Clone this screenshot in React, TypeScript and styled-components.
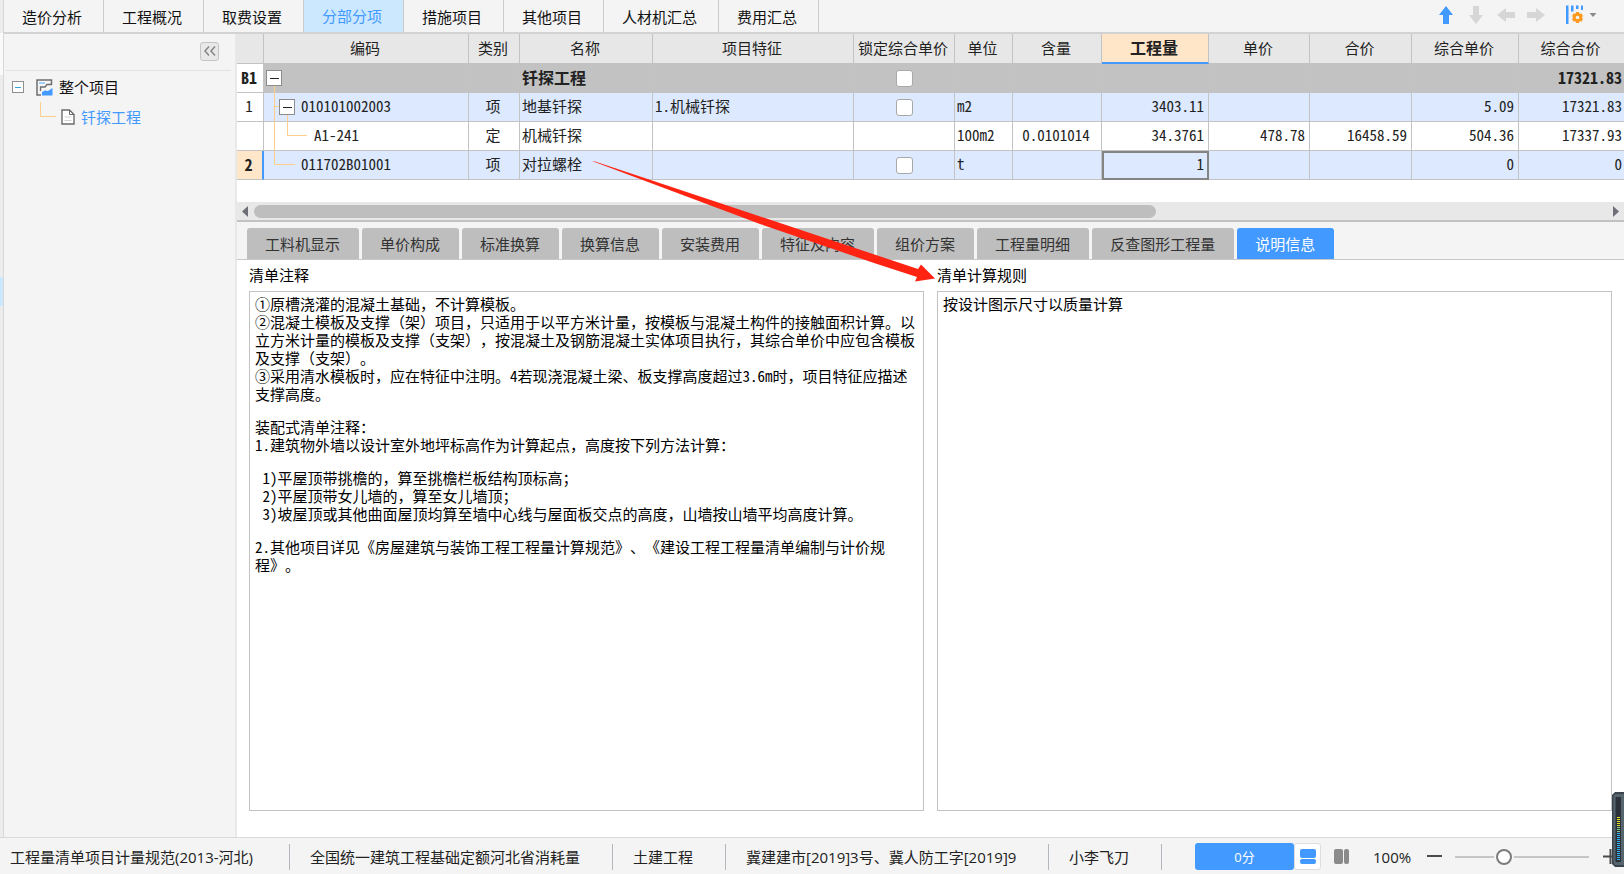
import React from "react";
import styled, { createGlobalStyle, css } from "styled-components";

const ui = '"Open Sans", "Noto Sans CJK SC", sans-serif';
const mono = '"Noto Sans Mono CJK SC", "Liberation Mono", "Noto Sans CJK SC", monospace';
const blue = "#4299ff";
const line = "#c3c3c3";
const guide = "#ffcd8c";

const GlobalStyle = createGlobalStyle`
  *, *::before, *::after { box-sizing: border-box; }
  body { margin: 0; background: #f4f4f4; color: #222; font: 15px/20px ${ui}; text-spacing-trim: space-all; }
  button, input { font: inherit; color: inherit; margin: 0; }
  button { padding: 0; border: 0; background: none; cursor: pointer; }
  h2, p, ul { margin: 0; padding: 0; }
  svg { display: block; flex: none; }
`;

const Page = styled.div`
  position: relative;
  min-height: 100vh;
  display: flex;
  flex-direction: column;
  overflow: hidden;
`;

const Workspace = styled.div`
  flex: 1;
  display: flex;
  min-width: 0;
`;

const DockStrip = styled.div`
  width: 4px;
  flex: none;
  background: linear-gradient(#ececec 33px, #fafafa 33px 75px, #ececec 75px 277px, #cce8ff 277px 306px, #ececec 306px);
  border-right: 1px solid #d8d8d8;
`;

const Main = styled.main`
  flex: 1;
  min-width: 0;
  display: flex;
  flex-direction: column;
`;

const TopBar = styled.header`
  height: 34px;
  display: flex;
  border-bottom: 2px solid #d2d2d2;
`;

const TopTabs = styled.nav`
  display: flex;
`;

const TopTab = styled.button<{ $active?: boolean }>`
  padding: ${(p) => (p.$active ? 0 : 2)}px 21px 0 18px;
  border-right: 1px solid #cbcbcb;
  color: ${(p) => (p.$active ? blue : "#111")};
  background: ${(p) => (p.$active ? "#cce8ff" : "transparent")};
`;

const Tools = styled.div`
  margin-left: auto;
  padding: 0 27px 2px 0;
  display: flex;
  align-items: center;
  gap: 12px;
`;

const ToolButton = styled.button`
  width: 18px;
  height: 30px;
  display: flex;
  align-items: center;
  justify-content: center;
`;

const ColumnsButton = styled(ToolButton)`
  width: 32px;
  margin-left: 8px;
  gap: 5px;
`;

const Body = styled.div`
  flex: 1;
  display: flex;
  min-width: 0;
`;

const Sidebar = styled.aside`
  width: 233px;
  flex: none;
  border-right: 2px solid #e8e8e8;
`;

const SidebarHead = styled.div`
  height: 37px;
  margin: 0 4px 0 2px;
  padding: 0 12px 2px 0;
  display: flex;
  align-items: center;
  justify-content: flex-end;
  border-bottom: 1px solid #e2e2e2;
`;

const Collapse = styled.button`
  width: 19px;
  height: 19px;
  display: grid;
  place-items: center;
  border: 1px solid #c4c4c4;
  border-radius: 3px;
  background: #e8e8e8;
`;

const ProjectTree = styled.ul`
  list-style: none;
  padding: 1px 0 0 8px;
`;

const TreeRow = styled.li<{ $child?: boolean }>`
  height: 30px;
  padding-left: ${(p) => (p.$child ? 28 : 0)}px;
  display: flex;
  align-items: center;
  gap: ${(p) => (p.$child ? 5 : 12)}px;
`;

const TreeLabel = styled.button<{ $active?: boolean }>`
  display: flex;
  align-items: center;
  gap: 6px;
  color: ${(p) => (p.$active ? blue : "#111")};
`;

const TreeToggle = styled.button`
  width: 12px;
  height: 12px;
  display: grid;
  place-items: center;
  border: 1px solid #8f8f8f;
  background: #fff;
  &::before { content: ""; width: 6px; height: 1px; background: #35a3dc; }
`;

const Content = styled.section`
  flex: 1;
  min-width: 0;
  display: flex;
  flex-direction: column;
  background: #fff;
`;

const Table = styled.table`
  width: 100%;
  table-layout: fixed;
  border-collapse: separate;
  border-spacing: 0;
  font: 15px/20px ${mono};
  margin-bottom: 22px;
`;

const cell = css`
  height: 29px;
  padding: 0 4px 3px 2px;
  border-right: 1px solid ${line};
  border-bottom: 1px solid ${line};
  white-space: nowrap;
  overflow: hidden;
`;

const Head = styled.th<{ $current?: boolean }>`
  ${cell}
  height: 30px;
  padding: 0 2px 2px 0;
  text-align: center;
  font-size: ${(p) => (p.$current ? 16 : 15)}px;
  font-weight: ${(p) => (p.$current ? 700 : 400)};
  background: ${(p) => (p.$current ? "#ffe6c8" : "#e7e7e7")};
  ${(p) => p.$current && `border-bottom: 2px solid ${blue};`}
  &:last-child { border-right: 0; }
`;

const RowHead = styled.th<{ $current?: boolean; $strong?: boolean }>`
  ${cell}
  padding: 0 2px 2px 0;
  text-align: center;
  font-size: ${(p) => (p.$strong ? 16 : 15)}px;
  font-weight: ${(p) => (p.$strong ? 700 : 400)};
  background: ${(p) => (p.$current ? "#ffe6c8" : "#fff")};
  ${(p) => p.$current && `border-right: 2px solid ${blue};`}
`;

const Row = styled.tr<{ $tone: string }>`
  background: ${(p) => p.$tone};
`;

const Cell = styled.td<{ $align?: string; $strong?: boolean; $selected?: boolean }>`
  ${cell}
  text-align: ${(p) => p.$align || "left"};
  font-size: ${(p) => (p.$strong ? 16 : 15)}px;
  font-weight: ${(p) => (p.$strong ? 700 : 400)};
  ${(p) => p.$selected && "outline: 2px solid #848484; outline-offset: -2px;"}
  &:last-child { border-right: 0; padding-right: 2px; }
`;

const CheckCell = styled.td`
  ${cell}
  padding: 0;
`;

const CodeCell = styled.td`
  ${cell}
  padding: 0;
  overflow: visible;
`;

const CodeInner = styled.div<{ $indent: number }>`
  position: relative;
  height: 28px;
  padding-left: ${(p) => p.$indent}px;
  display: flex;
  align-items: center;
  gap: 6px;
  span { padding-bottom: 3px; }
`;

const Guides = styled.svg`
  position: absolute;
  left: 0;
  top: 0;
  overflow: visible;
`;

const RowToggle = styled.button`
  position: relative;
  width: 16px;
  height: 16px;
  display: grid;
  place-items: center;
  border: 1px solid #8c8c8c;
  background: #fff;
  &::before { content: ""; width: 9px; height: 1px; background: #222; }
`;

const Check = styled.input`
  appearance: none;
  display: block;
  width: 17px;
  height: 17px;
  margin: 0 auto;
  border: 1px solid #a9a9a9;
  border-radius: 3px;
  background: #fff;
`;

const ScrollBar = styled.div`
  height: 20px;
  padding: 0 5px;
  display: flex;
  align-items: center;
  gap: 6px;
  background: #e8e8e8;
  border-bottom: 2px solid #c2c2c2;
`;

const ScrollTrack = styled.div`
  flex: 1;
  height: 13px;
`;

const ScrollThumb = styled.div`
  width: calc(100% * 2 / 3);
  height: 13px;
  border-radius: 7px;
  background: #bebebe;
`;

const DetailTabs = styled.nav`
  height: 38px;
  padding: 6px 10px 0;
  display: flex;
  gap: 3px;
  background: #f4f4f4;
  border-bottom: 1px solid #c8c8c8;
`;

const DetailTab = styled.button<{ $active?: boolean }>`
  padding: 0 19px 0 18px;
  border-radius: 3px 3px 0 0;
  color: ${(p) => (p.$active ? "#fff" : "#333")};
  background: ${(p) => (p.$active ? blue : "#bebebe")};
  white-space: nowrap;
`;

const Notes = styled.div`
  flex: 1;
  padding: 5px 12px 26px;
  display: grid;
  grid-template-columns: 1fr 1fr;
  gap: 13px;
  color: #000;
  font-family: ${mono};
`;

const Note = styled.section`
  min-width: 0;
  display: flex;
  flex-direction: column;
  gap: 6px;
`;

const NoteTitle = styled.h2`
  font: 15px/20px ${mono};
`;

const NoteBox = styled.div`
  flex: 1;
  padding: 3px 4px 4px 5px;
  border: 1px solid #c3c3c3;
  line-height: 18px;
`;

const Block = styled.p`
  margin-bottom: 15px;
  white-space: pre-wrap;
`;

const StatusBar = styled.footer`
  height: 37px;
  padding: 1px 6px 0 0;
  display: flex;
  align-items: center;
  border-top: 1px solid #d9d9d9;
`;

const StatusItem = styled.div<{ $width: number; $first?: boolean }>`
  height: 26px;
  padding: 0 32px 0 ${(p) => (p.$first ? 10 : 20)}px;
  border-right: 1px solid #b3b8be;
  line-height: 26px;
  span {
    display: block;
    width: ${(p) => p.$width}px;
    overflow: hidden;
    white-space: nowrap;
  }
`;

const StatusControls = styled.div`
  margin-left: auto;
  display: flex;
  align-items: center;
`;

const Score = styled.button`
  width: 99px;
  height: 27px;
  border-radius: 3px;
  background: ${blue};
  color: #fff;
  font-size: 13px;
`;

const ViewButton = styled.button<{ $on?: boolean }>`
  width: 27px;
  height: 27px;
  display: grid;
  place-items: center;
  border: 1px solid ${(p) => (p.$on ? "#dedede" : "transparent")};
  border-radius: 3px;
  background: ${(p) => (p.$on ? "#fff" : "transparent")};
  & + & { margin-left: 7px; }
`;

const Zoom = styled.label`
  width: 41px;
  margin: 0 12px 0 18px;
`;

const StepButton = styled.button`
  width: 16px;
  height: 26px;
  display: grid;
  place-items: center;
`;

const Slider = styled.input`
  appearance: none;
  width: 134px;
  height: 16px;
  margin: 0 13px;
  background: linear-gradient(#c6c6c6, #c6c6c6) center / 100% 2px no-repeat;
  &::-webkit-slider-thumb {
    appearance: none;
    width: 16px;
    height: 16px;
    border: 2px solid #7c7c7c;
    border-radius: 50%;
    background: #fff;
    box-shadow: -3px 0 0 -1px #f4f4f4, 3px 0 0 -1px #f4f4f4;
  }
`;

const LevelMeter = styled.svg`
  position: absolute;
  right: 0;
  bottom: 7px;
`;

const Annotation = styled.svg`
  position: absolute;
  left: 590px;
  top: 158px;
  pointer-events: none;
`;

const topTabs = ["造价分析", "工程概况", "取费设置", "分部分项", "措施项目", "其他项目", "人材机汇总", "费用汇总"];

const columns: { title: string; width?: number; current?: boolean }[] = [
  { title: "", width: 27 },
  { title: "编码", width: 205 },
  { title: "类别", width: 51 },
  { title: "名称", width: 133 },
  { title: "项目特征", width: 201 },
  { title: "锁定综合单价", width: 101 },
  { title: "单位", width: 58 },
  { title: "含量", width: 89 },
  { title: "工程量", width: 107, current: true },
  { title: "单价", width: 101 },
  { title: "合价", width: 102 },
  { title: "综合单价", width: 107 },
  { title: "综合合价" },
];

type Item = {
  no: string;
  code: string;
  kind: string;
  name: string;
  feature: string;
  lock: boolean;
  unit: string;
  values: string[];
  indent: number;
  toggle?: boolean;
  guides: string;
  tone: string;
  strong?: boolean;
  current?: boolean;
};

const items: Item[] = [
  { no: "B1", code: "", kind: "", name: "钎探工程", feature: "", lock: true, unit: "", values: ["", "", "", "", "", "17321.83"], indent: 2, toggle: true, guides: "M10.5 22V29", tone: "#c2c2c2", strong: true },
  { no: "1", code: "010101002003", kind: "项", name: "地基钎探", feature: "1.机械钎探", lock: true, unit: "m2", values: ["", "3403.11", "", "", "5.09", "17321.83"], indent: 15, toggle: true, guides: "M10.5 0V29M10.5 13.5H15M23.5 22V29", tone: "#dce9ff" },
  { no: "", code: "A1-241", kind: "定", name: "机械钎探", feature: "", lock: false, unit: "100m2", values: ["0.0101014", "34.3761", "478.78", "16458.59", "504.36", "17337.93"], indent: 50, guides: "M10.5 0V29M23.5 0V13.5H43", tone: "#fff" },
  { no: "2", code: "011702B01001", kind: "项", name: "对拉螺栓", feature: "", lock: true, unit: "t", values: ["", "1", "", "", "0", "0"], indent: 37, guides: "M10.5 0V13.5H31", tone: "#dce9ff", current: true },
];

const detailTabs = ["工料机显示", "单价构成", "标准换算", "换算信息", "安装费用", "特征及内容", "组价方案", "工程量明细", "反查图形工程量", "说明信息"];

const noteBlocks = [
  "①原槽浇灌的混凝土基础，不计算模板。\n②混凝土模板及支撑（架）项目，只适用于以平方米计量，按模板与混凝土构件的接触面积计算。以立方米计量的模板及支撑（支架），按混凝土及钢筋混凝土实体项目执行，其综合单价中应包含模板及支撑（支架）。\n③采用清水模板时，应在特征中注明。4若现浇混凝土梁、板支撑高度超过3.6m时，项目特征应描述支撑高度。",
  "装配式清单注释：\n1.建筑物外墙以设计室外地坪标高作为计算起点，高度按下列方法计算：",
  " 1)平屋顶带挑檐的，算至挑檐栏板结构顶标高；\n 2)平屋顶带女儿墙的，算至女儿墙顶；\n 3)坡屋顶或其他曲面屋顶均算至墙中心线与屋面板交点的高度，山墙按山墙平均高度计算。",
  "2.其他项目详见《房屋建筑与装饰工程工程量计算规范》、《建设工程工程量清单编制与计价规程》。",
];

const meter = Array.from({ length: 22 }, (_, i) => i);

function Arrow({ turn, color }: { turn: number; color: string }) {
  return (
    <svg width="20" height="20" viewBox="0 0 20 20">
      <path d="M10 1L17 10H13V19H7V10H3Z" fill={color} transform={`rotate(${turn} 10 10)`} />
    </svg>
  );
}

function Toolbar() {
  return (
    <Tools>
      <ToolButton aria-label="上移"><Arrow turn={0} color={blue} /></ToolButton>
      <ToolButton aria-label="下移"><Arrow turn={180} color="#d6d6d6" /></ToolButton>
      <ToolButton aria-label="升级"><Arrow turn={-90} color="#d6d6d6" /></ToolButton>
      <ToolButton aria-label="降级"><Arrow turn={90} color="#d6d6d6" /></ToolButton>
      <ColumnsButton aria-label="列设置">
        <svg width="18" height="20" viewBox="0 0 18 20">
          <path d="M0 0.5H2.5V19H0ZM5 0.5H7.5V6.5H5ZM10 0.5H12.5V4H10ZM15 0.5H17V5H15Z" fill={blue} />
          <g fill="#ff9a1f">
            <circle cx="11.5" cy="12.5" r="4.6" />
            <path d="M9.9 7H13.1V18H9.9Z" />
            <path d="M9.9 7H13.1V18H9.9Z" transform="rotate(60 11.5 12.5)" />
            <path d="M9.9 7H13.1V18H9.9Z" transform="rotate(120 11.5 12.5)" />
          </g>
          <circle cx="11.5" cy="12.5" r="1.8" fill="#f4f4f4" />
        </svg>
        <svg width="8" height="4" viewBox="0 0 8 4"><path d="M0.5 0H7.5L4 4Z" fill="#8a8a8a" /></svg>
      </ColumnsButton>
    </Tools>
  );
}

function BillTable() {
  return (
    <Table>
      <colgroup>
        {columns.map((c, i) => <col key={i} width={c.width} />)}
      </colgroup>
      <thead>
        <tr>{columns.map((c, i) => <Head key={i} scope="col" $current={c.current}>{c.title}</Head>)}</tr>
      </thead>
      <tbody>
        {items.map((r, i) => (
          <Row key={i} $tone={r.tone}>
            <RowHead scope="row" $current={r.current} $strong={r.strong || r.current}>{r.no}</RowHead>
            <CodeCell>
              <CodeInner $indent={r.indent}>
                <Guides width="50" height="29"><path d={r.guides} fill="none" stroke={guide} /></Guides>
                {r.toggle && <RowToggle aria-label="折叠" />}
                <span>{r.code}</span>
              </CodeInner>
            </CodeCell>
            <Cell $align="center">{r.kind}</Cell>
            <Cell $strong={r.strong}>{r.name}</Cell>
            <Cell>{r.feature}</Cell>
            <CheckCell>{r.lock && <Check type="checkbox" aria-label="锁定综合单价" />}</CheckCell>
            <Cell>{r.unit}</Cell>
            {r.values.map((v, k) => (
              <Cell key={k} $align={k === 0 ? "center" : "right"} $strong={r.strong} $selected={r.current && k === 1}>{v}</Cell>
            ))}
          </Row>
        ))}
      </tbody>
    </Table>
  );
}

export default function App() {
  return (
    <Page>
      <GlobalStyle />
      <Workspace>
        <DockStrip />
        <Main>
          <TopBar>
            <TopTabs>
              {topTabs.map((t) => <TopTab key={t} $active={t === "分部分项"}>{t}</TopTab>)}
            </TopTabs>
            <Toolbar />
          </TopBar>
          <Body>
            <Sidebar>
              <SidebarHead>
                <Collapse aria-label="收起">
                  <svg width="12" height="10" viewBox="0 0 12 10"><path d="M5 0.5L1 5L5 9.5M11 0.5L7 5L11 9.5" fill="none" stroke="#858585" strokeWidth="1.5" /></svg>
                </Collapse>
              </SidebarHead>
              <ProjectTree>
                <TreeRow>
                  <TreeToggle aria-label="折叠" />
                  <TreeLabel>
                    <svg width="17" height="17" viewBox="0 0 17 17">
                      <path d="M15.5 6V1H1V16H5" fill="none" stroke="#6e6e6e" strokeWidth="1.5" />
                      <path d="M4.5 12V8H9L11 5.5H16" fill="none" stroke="#6e6e6e" strokeWidth="1.3" />
                      <path d="M3 4H9" stroke="#8cc4ff" strokeWidth="1.5" />
                      <path d="M6 16.5V13L9 11.5L12 12L16.5 9V16.5Z" fill={blue} />
                    </svg>
                    整个项目
                  </TreeLabel>
                </TreeRow>
                <TreeRow $child>
                  <svg width="16" height="30" viewBox="0 0 16 30"><path d="M0.5 0V14.5H16" fill="none" stroke={guide} /></svg>
                  <TreeLabel $active>
                    <svg width="14" height="16" viewBox="0 0 14 16">
                      <path d="M1 1H8.5L13 5.5V15H1Z" fill="#fff" stroke="#6a6a6a" strokeWidth="1.4" />
                      <path d="M8.5 1V5.5H13" fill="none" stroke="#6a6a6a" />
                      <path d="M3.5 8H10.5M3.5 11.5H10.5" stroke="#d0d0d0" />
                    </svg>
                    钎探工程
                  </TreeLabel>
                </TreeRow>
              </ProjectTree>
            </Sidebar>
            <Content>
              <BillTable />
              <ScrollBar>
                <svg width="6" height="11" viewBox="0 0 6 11"><path d="M6 0V11L0 5.5Z" fill="#6f6f78" /></svg>
                <ScrollTrack><ScrollThumb /></ScrollTrack>
                <svg width="6" height="11" viewBox="0 0 6 11"><path d="M0 0V11L6 5.5Z" fill="#6f6f78" /></svg>
              </ScrollBar>
              <DetailTabs>
                {detailTabs.map((t) => <DetailTab key={t} $active={t === "说明信息"}>{t}</DetailTab>)}
              </DetailTabs>
              <Notes>
                <Note aria-labelledby="note-comment">
                  <NoteTitle id="note-comment">清单注释</NoteTitle>
                  <NoteBox>{noteBlocks.map((b, i) => <Block key={i}>{b}</Block>)}</NoteBox>
                </Note>
                <Note aria-labelledby="note-rule">
                  <NoteTitle id="note-rule">清单计算规则</NoteTitle>
                  <NoteBox><Block>按设计图示尺寸以质量计算</Block></NoteBox>
                </Note>
              </Notes>
            </Content>
          </Body>
        </Main>
      </Workspace>
      <StatusBar>
        <StatusItem $first $width={247}><span>工程量清单项目计量规范(2013-河北)</span></StatusItem>
        <StatusItem $width={270}><span>全国统一建筑工程基础定额河北省消耗量</span></StatusItem>
        <StatusItem $width={60}><span>土建工程</span></StatusItem>
        <StatusItem $width={270}><span>冀建建市[2019]3号、冀人防工字[2019]9</span></StatusItem>
        <StatusItem $width={60}><span>小李飞刀</span></StatusItem>
        <StatusControls>
          <Score>0分</Score>
          <ViewButton $on aria-label="上下布局">
            <svg width="16" height="15" viewBox="0 0 16 15"><rect width="16" height="9" rx="2" fill={blue} /><rect y="10" width="16" height="5" rx="2" fill={blue} /></svg>
          </ViewButton>
          <ViewButton aria-label="左右布局">
            <svg width="15" height="15" viewBox="0 0 15 15"><rect width="9" height="15" rx="2" fill="#8b8b8b" /><rect x="10" width="5" height="15" rx="2" fill="#8b8b8b" /></svg>
          </ViewButton>
          <Zoom htmlFor="zoom">100%</Zoom>
          <StepButton aria-label="缩小"><svg width="15" height="3"><rect width="15" height="2" fill="#4a4a4a" /></svg></StepButton>
          <Slider id="zoom" type="range" min={0} max={300} defaultValue={103} />
          <StepButton aria-label="放大"><svg width="15" height="15"><path d="M0 7.5H15M7.5 0V15" stroke="#4a4a4a" strokeWidth="2" /></svg></StepButton>
        </StatusControls>
      </StatusBar>
      <LevelMeter width="12" height="75" viewBox="0 0 12 75">
        <path d="M3 0H12V75H3L0 72V3Z" fill="#3b444c" />
        <path d="M3 2H12V73H3L1.5 71V4Z" fill="#56646d" />
        <rect x="3.5" y="5" width="5.5" height="65" rx="1" fill="#2c3038" />
        {meter.map((i) => (
          <rect key={i} x="5" y={25 + i * 2} width="3" height="1" fill={i < 5 ? "#e0e020" : i < 8 ? "#7cc98a" : "#2fb4f0"} />
        ))}
      </LevelMeter>
      <Annotation width="346" height="126" viewBox="590 158 346 126">
        <path d="M592 161L595 161.5L918 269L921 264.5L935 278.5L915 281.5L917 277L874 263L760 224Z" fill="#ff2312" />
      </Annotation>
    </Page>
  );
}
